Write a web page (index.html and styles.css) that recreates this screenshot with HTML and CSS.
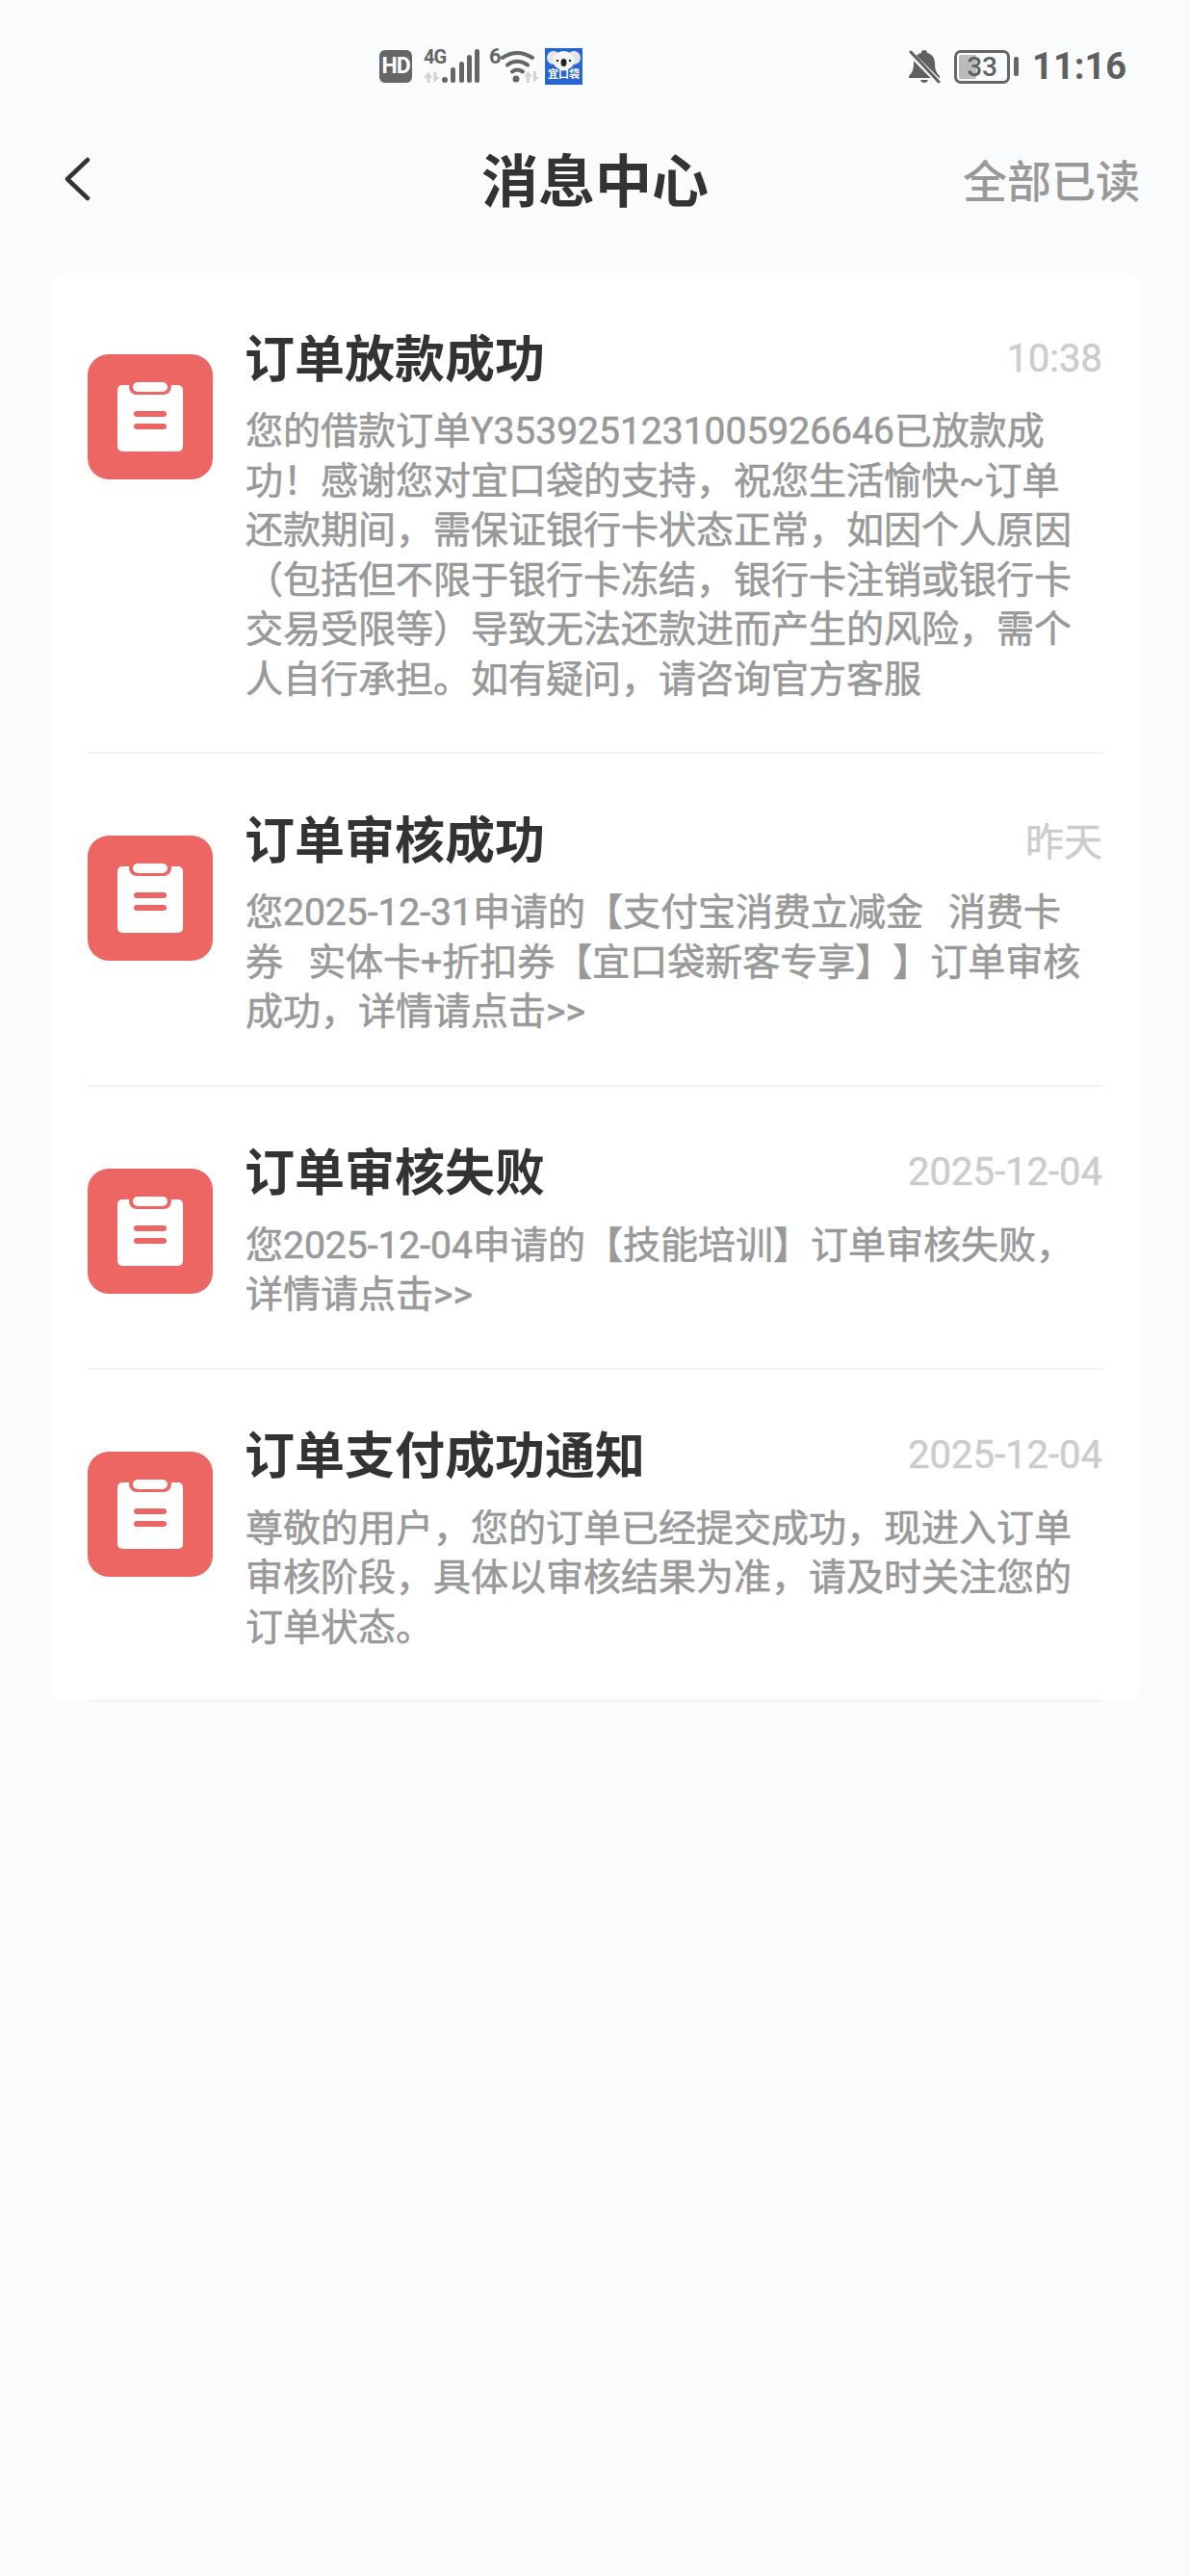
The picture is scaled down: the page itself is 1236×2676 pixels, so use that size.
FILE: index.html
```html
<!DOCTYPE html>
<html lang="zh-CN">
<head>
  <meta charset="UTF-8" />
  <title>消息中心</title>
  <meta name="viewport" content="width=device-width, initial-scale=1.0">
  <link rel="stylesheet" href="styles.css">
</head>
<body>

  <svg class="defs" width="0" height="0">
    <symbol id="clipboard" viewBox="0 0 130 130">
      <rect x="31" y="32" width="68" height="69" rx="5" fill="#fff"/>
      <rect x="43" y="26" width="44" height="16" rx="8" fill="#ed6663"/>
      <rect x="47" y="29" width="36" height="10" rx="5" fill="#fff"/>
      <rect x="48" y="59" width="34" height="6" rx="3" fill="#ed6663"/>
      <rect x="48" y="72" width="34" height="6" rx="3" fill="#ed6663"/>
    </symbol>
  </svg>

  <div class="status-bar">
    <div class="status-left">
      <span class="hd-badge">HD</span>
      <span class="signal">
        <svg width="60" height="40" viewBox="0 0 60 40">
          <path d="M6 26l-5 6h3.500v5h3v-5h3zM11.500 26h3v5h3.500l-6.500 6z" fill="#d2d2d2"/>
          <g fill="#666">
            <circle cx="23" cy="34" r="3"/>
            <rect x="29" y="21" width="5" height="16" rx="2.500"/>
            <rect x="38" y="15" width="5" height="22" rx="2.500"/>
            <rect x="46" y="8" width="5" height="29" rx="2.500"/>
            <rect x="54" y="2" width="5" height="35" rx="2.500"/>
          </g>
        </svg>
        <span class="net-label">4G</span>
      </span>
      <span class="wifi">
        <span class="wifi-label">6</span>
        <svg width="36" height="36" viewBox="0 0 36 36">
          <g fill="none" stroke="#666" stroke-width="4" stroke-linecap="round">
            <path d="M2 9Q17 -1 33 9"/>
            <path d="M7 16.500Q17 9 28 16.500"/>
            <path d="M12 23.500Q17 19.500 23 23.500"/>
          </g>
          <circle cx="16" cy="31" r="3.500" fill="#666"/>
        </svg>
        <svg class="wifi-arrows" width="16" height="12" viewBox="0 0 16 12">
          <path d="M4.500 0L0 5.500h3V12h3V5.500h3zM10 0h3v6h3l-6 6z" fill="#d2d2d2"/>
        </svg>
      </span>
      <span class="app-icon">
        <svg width="39" height="23" viewBox="0 0 39 23">
          <ellipse cx="9" cy="10" rx="7" ry="7" fill="#e4e6ea"/>
          <ellipse cx="30" cy="10" rx="7" ry="7" fill="#e4e6ea"/>
          <ellipse cx="19.500" cy="13" rx="11" ry="10" fill="#f6f6f6"/>
          <ellipse cx="19.500" cy="15" rx="3" ry="4" fill="#222"/>
          <circle cx="13" cy="13" r="1.200" fill="#222"/>
          <circle cx="26" cy="13" r="1.200" fill="#222"/>
        </svg>
        <span class="app-name">宜口袋</span>
      </span>
    </div>
    <div class="status-right">
      <svg width="34" height="36" viewBox="0 0 34 36">
        <path d="M17 1c-2 0-3 1-3.200 3C8 5.500 6 10 6 15c0 5-1 9-5 13v2h32v-2c-4-4-5-8-5-13 0-5-2-9.500-7.800-11C20 2 19 1 17 1z" fill="#606060"/>
        <path d="M13 32h8c-.5 2-2 3-4 3s-3.500-1-4-3z" fill="#606060"/>
        <path d="M1 3l32 32" stroke="#fafbfd" stroke-width="6"/>
        <path d="M3 3l29 31" stroke="#606060" stroke-width="3" stroke-linecap="round"/>
      </svg>
      <span class="battery">
        <span class="battery-body">
          <span class="battery-fill"></span>
          <span class="battery-num">33</span>
        </span>
        <span class="battery-nub"></span>
      </span>
      <span class="clock">11:16</span>
    </div>
  </div>

  <header class="nav">
    <button class="back" aria-label="返回">
      <svg width="28" height="46" viewBox="0 0 28 46">
        <path d="M25 3L4 23 25 43" fill="none" stroke="#333" stroke-width="4.500" stroke-linecap="round" stroke-linejoin="round"/>
      </svg>
    </button>
    <h1>消息中心</h1>
    <a class="read-all">全部已读</a>
  </header>

  <main class="card">
    <div class="msg">
      <div class="msg-icon"><svg width="130" height="130"><use href="#clipboard"/></svg></div>
      <div class="msg-body">
        <div class="msg-head">
          <h2>订单放款成功</h2>
          <time>10:38</time>
        </div>
        <p>您的借款订单Y3539251231005926646已放款成<br>功！感谢您对宜口袋的支持，祝您生活愉快~订单<br>还款期间，需保证银行卡状态正常，如因个人原因<br>（包括但不限于银行卡冻结，银行卡注销或银行卡<br>交易受限等）导致无法还款进而产生的风险，需个<br>人自行承担。如有疑问，请咨询官方客服</p>
      </div>
    </div>

    <div class="msg">
      <div class="msg-icon"><svg width="130" height="130"><use href="#clipboard"/></svg></div>
      <div class="msg-body">
        <div class="msg-head">
          <h2>订单审核成功</h2>
          <time>昨天</time>
        </div>
        <p>您2025-12-31申请的【支付宝消费立减金<span class="gap"></span>消费卡<br>券<span class="gap"></span>实体卡+折扣券【宜口袋新客专享】】订单审核<br>成功，详情请点击&gt;&gt;</p>
      </div>
    </div>

    <div class="msg">
      <div class="msg-icon"><svg width="130" height="130"><use href="#clipboard"/></svg></div>
      <div class="msg-body">
        <div class="msg-head">
          <h2>订单审核失败</h2>
          <time>2025-12-04</time>
        </div>
        <p>您2025-12-04申请的【技能培训】订单审核失败，<br>详情请点击&gt;&gt;</p>
      </div>
    </div>

    <div class="msg">
      <div class="msg-icon"><svg width="130" height="130"><use href="#clipboard"/></svg></div>
      <div class="msg-body">
        <div class="msg-head">
          <h2>订单支付成功通知</h2>
          <time>2025-12-04</time>
        </div>
        <p>尊敬的用户，您的订单已经提交成功，现进入订单<br>审核阶段，具体以审核结果为准，请及时关注您的<br>订单状态。</p>
      </div>
    </div>
  </main>

</body>
</html>
```

FILE: styles.css
```css
body {
  font-family: Roboto, "Noto Sans CJK SC", sans-serif;
  background: #fafbfd;
  margin: 0;
  padding: 0;
  height: 2676px;
  overflow: hidden;
  text-spacing-trim: space-all;
}

.defs {
  display: block;
}

/* status bar */
.status-bar {
  display: flex;
  align-items: center;
  justify-content: space-between;
  height: 70px;
  padding: 34px 66px 0 394px;
}

.status-left {
  display: flex;
  align-items: center;
}

.hd-badge {
  width: 34px;
  height: 34px;
  border-radius: 6px;
  background: #666;
  color: #fff;
  font-size: 23px;
  font-weight: 700;
  line-height: 34px;
  text-align: center;
  letter-spacing: -1px;
}

.signal {
  position: relative;
  width: 60px;
  height: 40px;
  margin-left: 11px;
}

.net-label {
  position: absolute;
  top: -2px;
  left: 1px;
  font-size: 20px;
  font-weight: 700;
  color: #666;
  letter-spacing: -1px;
}

.wifi {
  position: relative;
  display: flex;
  align-items: center;
  width: 58px;
  height: 40px;
  margin-left: 6px;
}

.wifi svg {
  margin-left: 15px;
}

.wifi-label {
  position: absolute;
  top: -3px;
  left: 3px;
  font-size: 22px;
  font-weight: 700;
  color: #666;
}

.wifi .wifi-arrows {
  position: absolute;
  left: 24px;
  bottom: 3px;
}

.app-icon {
  display: flex;
  flex-direction: column;
  align-items: center;
  width: 39px;
  height: 38px;
  margin-left: 3px;
  background: #2867d2;
  overflow: hidden;
}

.app-name {
  margin-top: -3px;
  font-size: 11px;
  font-weight: 700;
  line-height: 16px;
  color: #fff;
}

.status-right {
  display: flex;
  align-items: center;
}

.battery {
  display: flex;
  align-items: center;
  margin-left: 14px;
}

.battery-body {
  position: relative;
  box-sizing: border-box;
  width: 58px;
  height: 35px;
  border: 3px solid #666;
  border-radius: 7px;
}

.battery-fill {
  position: absolute;
  top: 2px;
  left: 2px;
  width: 18px;
  height: 25px;
  background: #bbb;
  border-radius: 2px;
}

.battery-num {
  position: absolute;
  inset: 0;
  font-size: 28px;
  font-weight: 500;
  line-height: 29px;
  text-align: center;
  color: #5f5f5f;
}

.battery-nub {
  width: 5px;
  height: 20px;
  margin-left: 4px;
  border-radius: 2px;
  background: #666;
}

.clock {
  margin-left: 14px;
  font-size: 38px;
  font-weight: 700;
  color: #5f5f5f;
}

/* nav */
.nav {
  display: grid;
  grid-template-columns: 1fr auto 1fr;
  align-items: center;
  height: 100px;
  margin: 34px 52px 45px;
}

.back {
  justify-self: start;
  display: flex;
  margin: 0 0 4px 14px;
  padding: 0;
  border: 0;
  background: none;
}

.nav h1 {
  margin: 0 0 8px;
  font-size: 59px;
  font-weight: 700;
  color: #333;
}

.read-all {
  justify-self: end;
  margin-bottom: 6px;
  font-size: 46px;
  font-weight: 500;
  color: #999;
}

/* message list */
.card {
  margin: 0 52px;
  padding: 0 39px;
  background: #fff;
  border-radius: 16px;
}

.msg {
  display: flex;
  gap: 34px;
  padding: 60px 0 49px;
  border-bottom: 2px solid #f1f2f4;
}

.msg-icon {
  flex: none;
  width: 130px;
  height: 130px;
  margin-top: 25px;
  border-radius: 22px;
  background: #ed6663;
}

.msg-icon svg {
  display: block;
}

.msg-body {
  flex: 1;
  min-width: 0;
}

.msg-head {
  display: flex;
  align-items: center;
  justify-content: space-between;
  height: 52px;
  margin-bottom: 28px;
}

.msg-head h2 {
  margin: 0 0 0 -1px;
  font-size: 52px;
  font-weight: 700;
  color: #333;
}

.msg-head time {
  margin-top: 6px;
  font-size: 40px;
  -webkit-text-stroke: 0.5px #ccc;
  color: #ccc;
}

.msg-body p {
  margin: 0;
  font-size: 39px;
  line-height: 51.5px;
  -webkit-text-stroke: 0.6px #999;
  color: #999;
  white-space: nowrap;
}

.gap {
  display: inline-block;
  width: 26px;
}
```
